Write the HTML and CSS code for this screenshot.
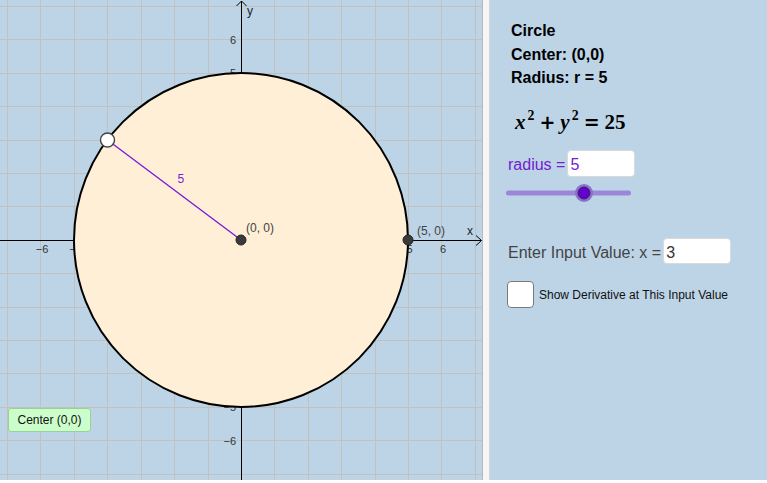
FILE: index.html
```html
<!DOCTYPE html>
<html lang="en">
<head>
    <meta charset="UTF-8">
    <title>Circle - Center and Radius</title>
    <link rel="stylesheet" href="styles.css">
</head>
<body>

<div class="app">
    <div class="graphics">
        <svg class="plot" width="482" height="480" viewBox="0 0 482 480">
            <!-- grid, one line per unit (33.4px) -->
            <path class="grid" d="M7.5 0V480M40.5 0V480M74.5 0V480M107.5 0V480M141.5 0V480M174.5 0V480M208.5 0V480M274.5 0V480M308.5 0V480M341.5 0V480M375.5 0V480M408.5 0V480M441.5 0V480M475.5 0V480
                M0 6.5H482M0 39.5H482M0 73.5H482M0 106.5H482M0 140.5H482M0 173.5H482M0 206.5H482M0 273.5H482M0 307.5H482M0 340.5H482M0 373.5H482M0 407.5H482M0 440.5H482M0 474.5H482"/>

            <!-- axes -->
            <path class="axis" d="M0 240.5H481M476 235.5L481.5 240.5L476 245.5"/>
            <path class="axis" d="M241.5 480V1M236.5 6L241.5 1L246.5 6"/>
            <text class="axis-name" x="467" y="235">x</text>
            <text class="axis-name" x="247" y="15">y</text>

            <!-- tick labels -->
            <text class="tick" x="42" y="253" text-anchor="middle">−6</text>
            <text class="tick" x="75.5" y="253" text-anchor="middle">−5</text>
            <text class="tick" x="409.5" y="253" text-anchor="middle">5</text>
            <text class="tick" x="443" y="253" text-anchor="middle">6</text>
            <text class="tick" x="236" y="43.5" text-anchor="end">6</text>
            <text class="tick" x="236" y="77" text-anchor="end">5</text>
            <text class="tick" x="236" y="411" text-anchor="end">−5</text>
            <text class="tick" x="236" y="444.5" text-anchor="end">−6</text>

            <!-- circle c: x^2 + y^2 = 25 -->
            <circle class="disc" cx="241" cy="240" r="167"/>

            <line class="radius-seg" x1="107.5" y1="140" x2="241" y2="240"/>
            <text class="seg-label" x="177.5" y="183">5</text>

            <circle class="free-pt" cx="107.5" cy="140" r="7"/>
            <circle class="pt" cx="241" cy="240" r="5"/>
            <circle class="pt" cx="408" cy="240" r="5"/>
            <text class="pt-label" x="246" y="231.5">(0, 0)</text>
            <text class="pt-label" x="417" y="235">(5, 0)</text>
        </svg>

        <button class="center-btn">Center (0,0)</button>
    </div>

    <div class="divider"></div>

    <div class="algebra">
        <div class="info">
            <div>Circle</div>
            <div>Center: (0,0)</div>
            <div>Radius: r = 5</div>
        </div>

        <div class="equation">
            <i>x</i><sup>2</sup><span class="op">+</span><i>y</i><sup>2</sup><span class="op">=</span>25
        </div>

        <div class="radius-row">
            <span class="radius-label">radius =</span>
            <div class="field radius-field">5</div>
        </div>

        <svg class="slider" width="130" height="20" viewBox="0 0 130 20">
            <line x1="4.5" y1="10" x2="124.5" y2="10" stroke="#9c86da" stroke-width="5" stroke-linecap="round"/>
            <circle cx="80" cy="10" r="9" fill="#8c6fd6"/>
            <circle cx="80" cy="10" r="6" fill="#6500d2" stroke="#2e2e2e" stroke-width="1"/>
        </svg>

        <div class="input-row">
            <span class="input-label">Enter Input Value: x =</span>
            <div class="field x-field">3</div>
        </div>

        <label class="check-row">
            <span class="checkbox"></span>
            <span>Show Derivative at This Input Value</span>
        </label>
    </div>
</div>

</body>
</html>
```

FILE: styles.css
```css
body {
    margin: 0;
    background: white;
    font-family: "Liberation Sans", Arial, sans-serif;
}
.app {
    display: flex;
    height: 480px;
}
.graphics {
    position: relative;
    width: 482px;
    background: #bdd4e7;
    border-right: 1px solid #b9b9b9;
}
.plot {
    display: block;
}
.grid {
    stroke: #c3c1be;
    stroke-width: 1;
    fill: none;
}
.axis {
    stroke: #000;
    stroke-width: 1;
    fill: none;
}
.axis-name {
    font-size: 12px;
    fill: #222;
}
.tick {
    font-size: 11px;
    fill: #333;
}
.disc {
    fill: #ffefd6;
    stroke: #000;
    stroke-width: 2;
}
.radius-seg {
    stroke: #7a1cdb;
    stroke-width: 1.4;
}
.seg-label {
    font-size: 12px;
    fill: #7a1cdb;
}
.free-pt {
    fill: #fff;
    stroke: #444;
    stroke-width: 1.4;
}
.pt {
    fill: #3a3a3a;
    stroke: #222;
    stroke-width: 1;
}
.pt-label {
    font-size: 12px;
    fill: #444;
}
.center-btn {
    position: absolute;
    left: 8px;
    top: 408px;
    width: 83px;
    height: 24px;
    padding: 0;
    background: #ccfecc;
    border: 1px solid #96d296;
    border-radius: 3px;
    font-family: "Liberation Sans", Arial, sans-serif;
    font-size: 12px;
    color: #111;
}
.divider {
    width: 6px;
    background: #f6f6f6;
    border-right: 1px solid #d4d4d4;
}
.algebra {
    flex: 1;
    background: #bdd4e7;
    padding: 19px 0 0 18px;
}
.info {
    margin-left: 3px;
    font-size: 16px;
    font-weight: bold;
    line-height: 23.5px;
    color: #000;
}
.equation {
    margin: 17px 0 0 7px;
    height: 30px;
    line-height: 30px;
    font-family: "Liberation Serif", "Times New Roman", serif;
    font-size: 21px;
    font-weight: bold;
    color: #000;
    white-space: nowrap;
}
.equation i {
    font-style: italic;
}
.equation sup {
    font-size: 0.66em;
    line-height: 0;
    vertical-align: 0.62em;
    margin-left: 2px;
}
.equation .op {
    font-family: "DejaVu Sans", sans-serif;
    font-weight: bold;
    font-size: 19px;
    padding: 0 5px 0 5px;
}
.radius-row {
    display: flex;
    align-items: baseline;
    margin-top: 13.5px;
}
.radius-label {
    font-size: 16px;
    color: #7320cf;
    margin-right: 2px;
}
.field {
    box-sizing: border-box;
    width: 68px;
    background: white;
    border: 1px solid #dadada;
    border-radius: 4px;
    font-size: 16px;
    padding-left: 2px;
}
.radius-field {
    height: 27px;
    padding-top: 2px;
    line-height: 23px;
    color: #7320cf;
}
.slider {
    display: block;
    margin: 6px 0 0 -4px;
}
.input-row {
    display: flex;
    align-items: baseline;
    margin-top: 35px;
}
.input-label {
    font-size: 16px;
    color: #444;
    margin-right: 2px;
}
.x-field {
    height: 26px;
    padding-top: 3px;
    line-height: 21px;
    color: #333;
}
.check-row {
    display: flex;
    align-items: center;
    margin: 17px 0 0 -1px;
    font-size: 12px;
    color: #111;
}
.checkbox {
    box-sizing: border-box;
    width: 27px;
    height: 27px;
    margin-right: 5px;
    background: white;
    border: 1.5px solid #7a7a7a;
    border-radius: 4px;
}
```
